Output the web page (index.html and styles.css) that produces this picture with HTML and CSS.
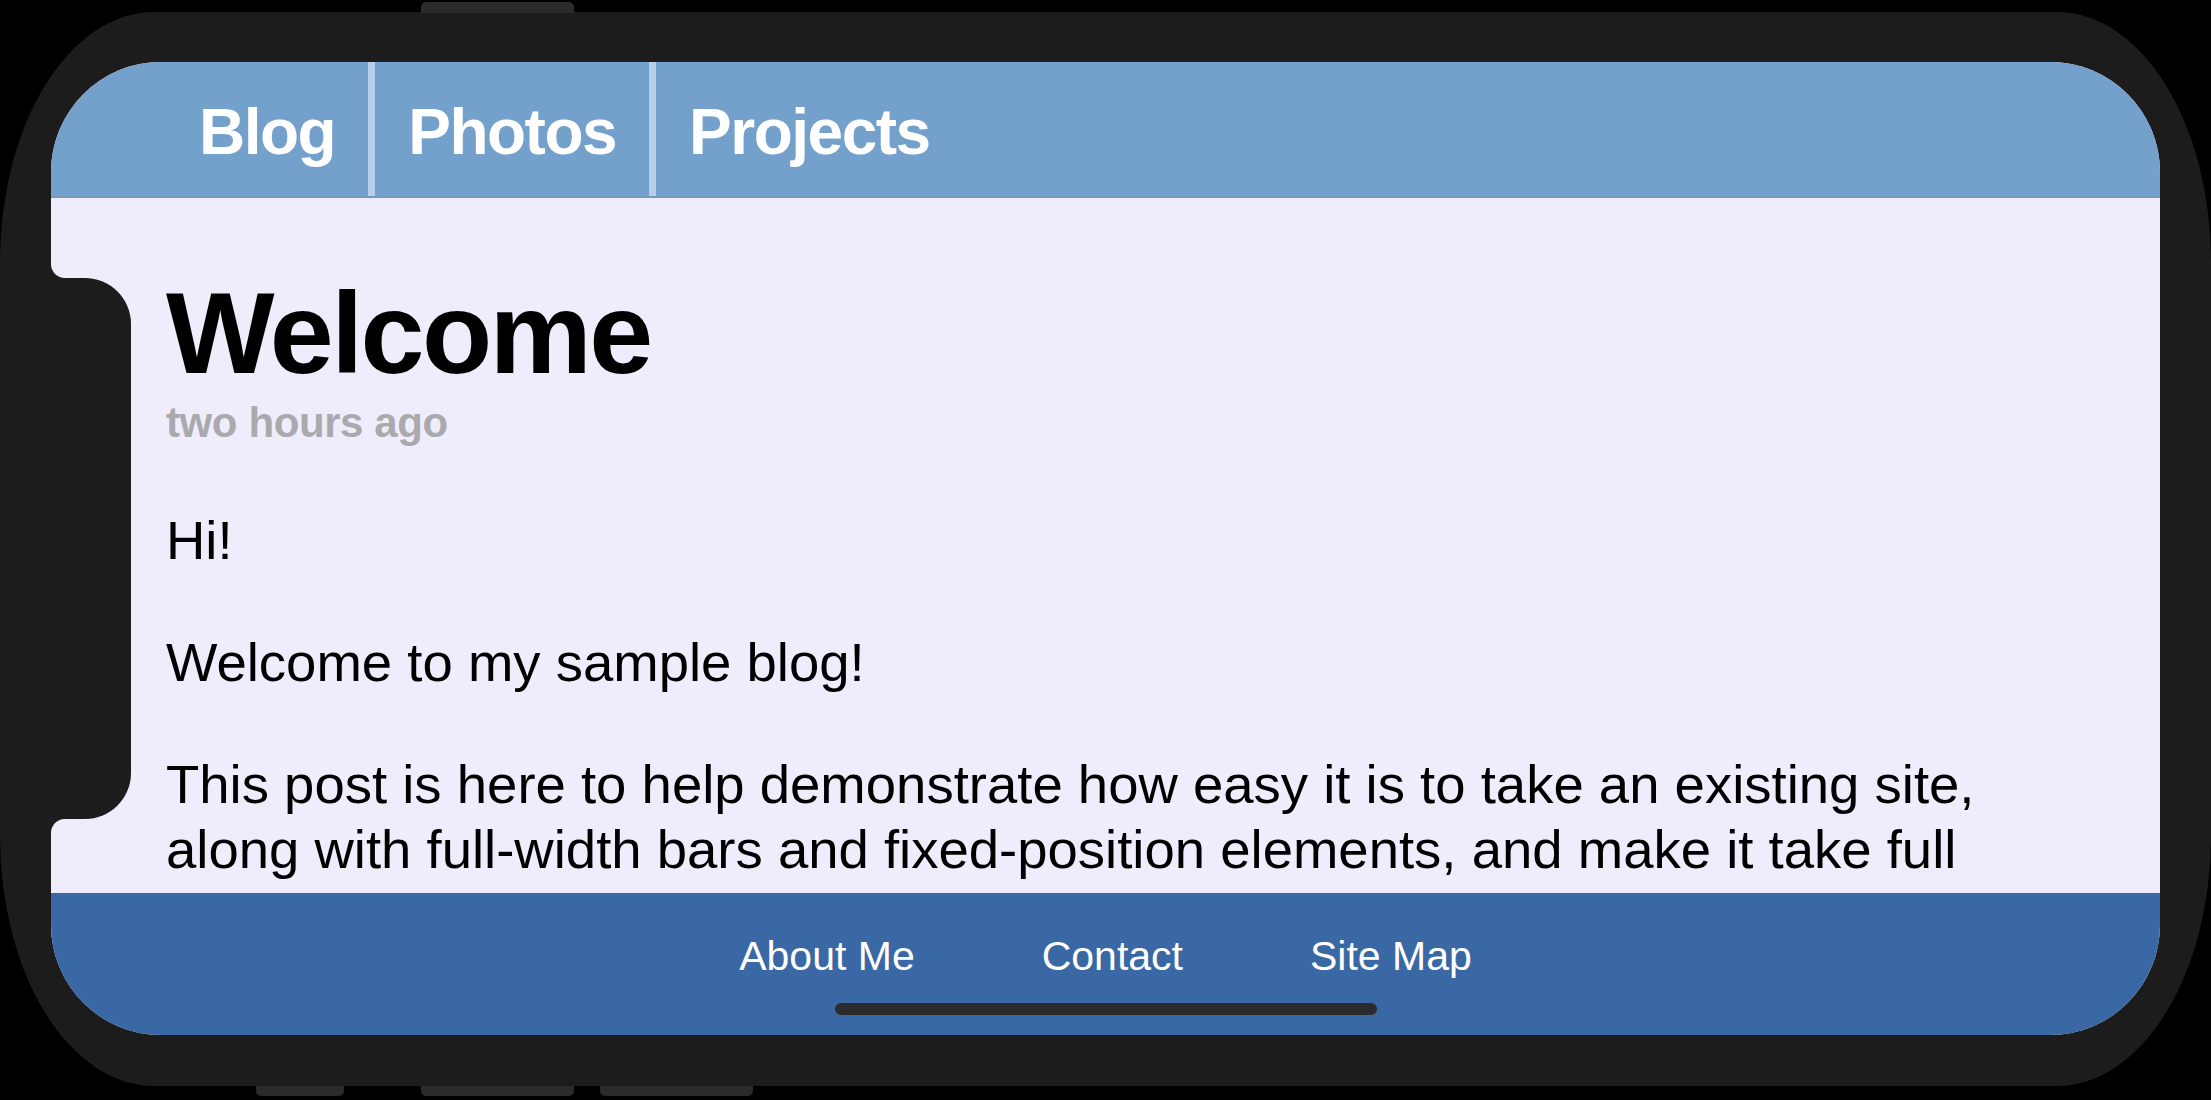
FILE: index.html
```html
<!DOCTYPE html>
<html lang="en">
<head>
<meta charset="utf-8">
<title>Welcome</title>
<link rel="stylesheet" href="styles.css">
</head>
<body>
<div class="device">
  <span class="hw-btn hw-top"></span>
  <span class="hw-btn hw-bottom hw-b1"></span>
  <span class="hw-btn hw-bottom hw-b2"></span>
  <span class="hw-btn hw-bottom hw-b3"></span>
  <div class="screen">
    <header class="site-header">
      <nav class="main-nav">
        <a class="main-link" href="#">Blog</a>
        <a class="main-link" href="#">Photos</a>
        <a class="main-link" href="#">Projects</a>
      </nav>
    </header>
    <main class="content">
      <article class="post">
        <h1 class="post-title">Welcome</h1>
        <time class="post-date">two hours ago</time>
        <p class="post-text">Hi!</p>
        <p class="post-text">Welcome to my sample blog!</p>
        <p class="post-text">This post is here to help demonstrate how easy it is to take an existing site, along with full-width bars and fixed-position elements, and make it take full</p>
      </article>
    </main>
    <footer class="site-footer">
      <nav class="foot-nav">
        <a class="foot-link" href="#">About Me</a>
        <a class="foot-link" href="#">Contact</a>
        <a class="foot-link" href="#">Site Map</a>
      </nav>
    </footer>
    <div class="notch"></div>
    <div class="home-indicator"></div>
  </div>
</div>
</body>
</html>
```

FILE: styles.css
```css
html, body {
  margin: 0;
  padding: 0;
  background: #000;
}
body {
  width: 2211px;
  height: 1100px;
  overflow: hidden;
  padding-top: 12px;
  box-sizing: border-box;
  font-family: "Liberation Sans", Arial, Helvetica, sans-serif;
}
.device {
  position: relative;
  height: 1074px;
  box-sizing: border-box;
  padding: 50px 51px 51px 51px;
  background: #1c1c1c;
  border-radius: 154px / 250px;
}
.hw-btn {
  position: absolute;
  background: #2b2b2b;
  display: block;
}
.hw-top {
  top: -10px;
  left: 421px;
  width: 153px;
  height: 11px;
  border-radius: 5px 5px 0 0;
}
.hw-bottom {
  top: 100%;
  height: 10px;
  border-radius: 0 0 5px 5px;
}
.hw-b1 { left: 256px; width: 88px; }
.hw-b2 { left: 421px; width: 153px; }
.hw-b3 { left: 600px; width: 153px; }

.screen {
  position: relative;
  height: 100%;
  border-radius: 110px;
  overflow: hidden;
  display: flex;
  flex-direction: column;
  background: #efedfc;
}

.site-header {
  flex: 0 0 136px;
  box-sizing: border-box;
  background: #74a0cc;
  border-bottom: 2px solid #7598bd;
  padding-left: 115px;
}
.main-nav {
  display: flex;
  height: 100%;
}
.main-link {
  display: flex;
  align-items: center;
  padding: 5px 33px 0 33px;
  border-right: 7px solid #b7cfe9;
  color: #fff;
  text-decoration: none;
  font-weight: bold;
  font-size: 64px;
  letter-spacing: -1.5px;
}
.main-link:last-child {
  border-right: none;
}

.content {
  flex: 1 1 auto;
  overflow: hidden;
  padding: 70px 115px 0 115px;
  color: #000;
}
.post-title {
  margin: 0;
  font-size: 115px;
  line-height: 130px;
  font-weight: bold;
  letter-spacing: -2.6px;
}
.post-date {
  display: block;
  font-size: 42px;
  line-height: 50px;
  font-weight: bold;
  letter-spacing: -0.4px;
  color: #a9a9ae;
  margin-bottom: 60px;
}
.post-text {
  margin: 0 0 57px 0;
  font-size: 54.5px;
  line-height: 65px;
}
.post-text:last-child {
  margin-bottom: 0;
}

.site-footer {
  flex: 0 0 142px;
  box-sizing: border-box;
  background: #3a68a4;
  padding-top: 39px;
}
.foot-nav {
  display: flex;
  justify-content: center;
  gap: 127px;
}
.foot-link {
  color: #fff;
  text-decoration: none;
  font-size: 41px;
  line-height: 48px;
}

.notch {
  position: absolute;
  left: 0;
  top: 216px;
  width: 80px;
  height: 541px;
  background: #1c1c1c;
  border-radius: 0 46px 46px 0;
}
.notch::before,
.notch::after {
  content: "";
  position: absolute;
  left: 0;
  width: 14px;
  height: 14px;
}
.notch::before {
  top: -14px;
  background: radial-gradient(circle at 100% 0, transparent 13.5px, #1c1c1c 14.5px);
}
.notch::after {
  top: 100%;
  background: radial-gradient(circle at 100% 100%, transparent 13.5px, #1c1c1c 14.5px);
}

.home-indicator {
  position: absolute;
  left: 50%;
  bottom: 20px;
  width: 542px;
  height: 12px;
  margin-left: -271px;
  border-radius: 6px;
  background: #2b2b2b;
}
```
